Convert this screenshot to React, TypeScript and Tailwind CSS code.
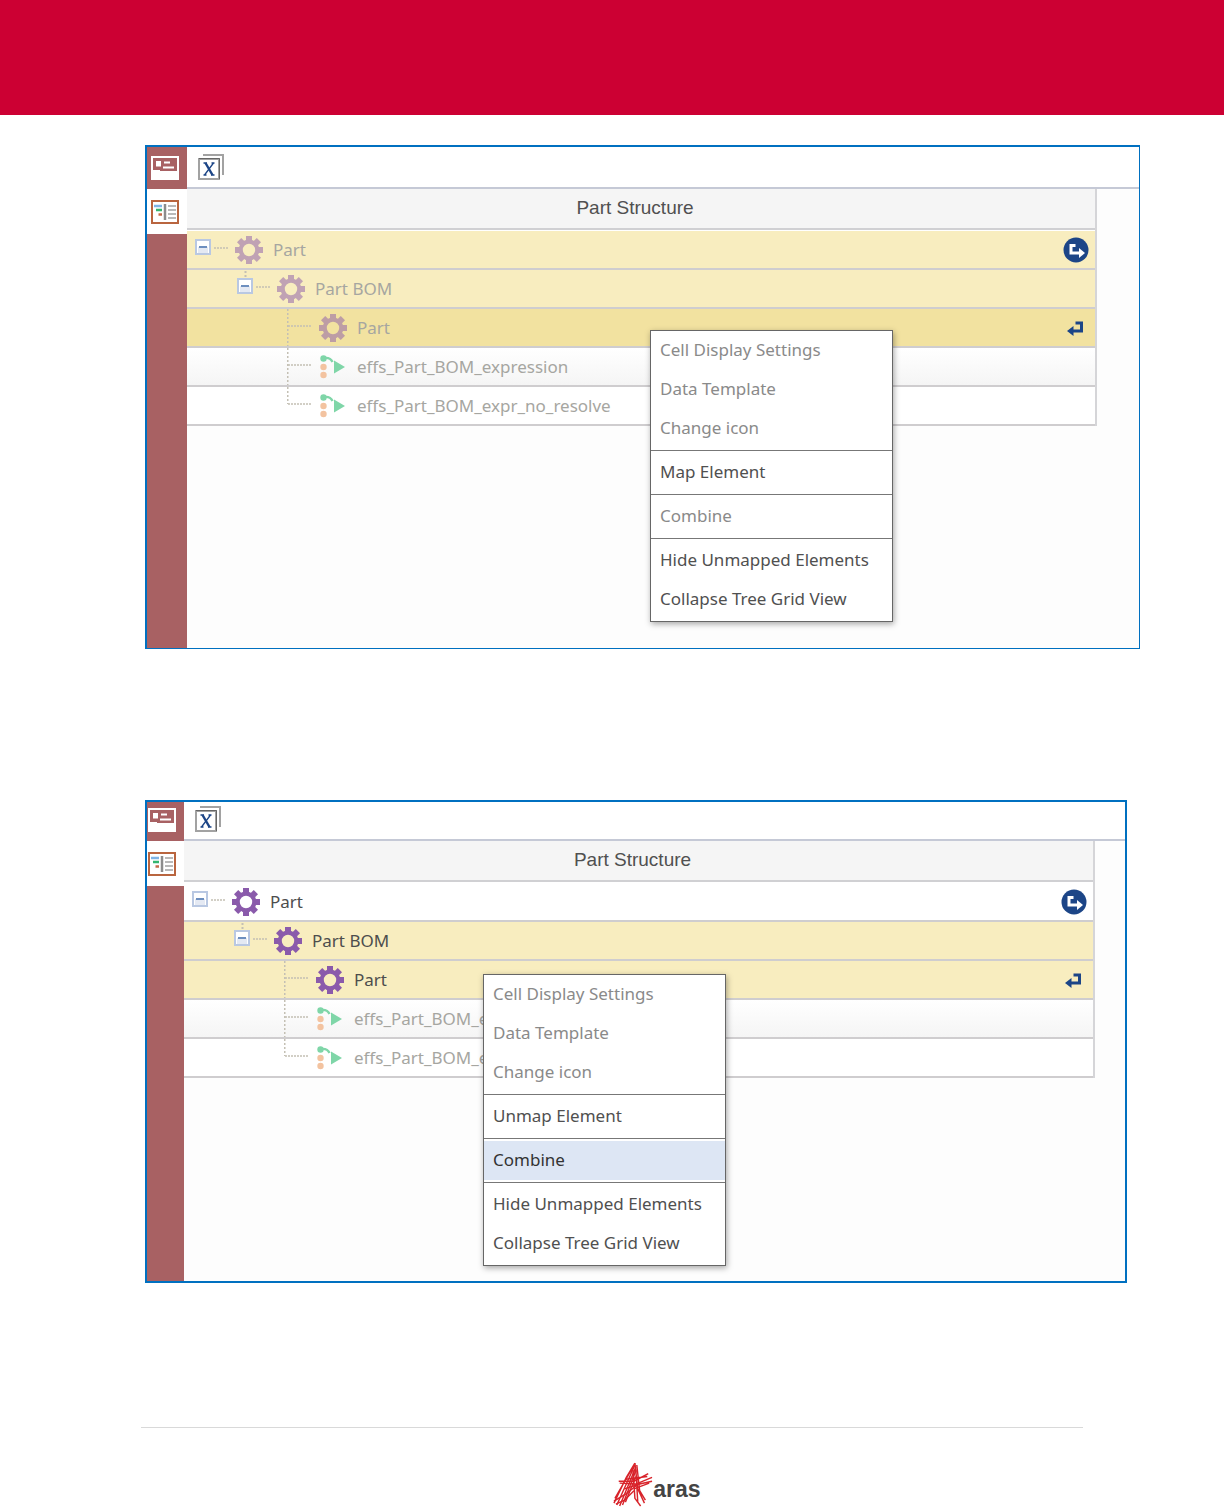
import React from 'react';

type RowKind = 'part' | 'expression';
type Tone = 'plain' | 'mapped' | 'selected' | 'stripe';

interface TreeRow {
  label: string;
  level: 0 | 1 | 2;
  kind: RowKind;
  tone: Tone;
  muted: boolean;
  last?: boolean;
  action?: 'enter' | 'return';
}

interface MenuItem {
  label: string;
  disabled?: boolean;
  active?: boolean;
}

const toneClass: Record<Tone, string> = {
  plain: 'bg-white',
  mapped: 'bg-[#f8edbf]',
  selected: 'bg-[#f2e2a0]',
  stripe: 'bg-linear-to-b from-white to-[#f5f5f5]',
};

const indentClass = ['pl-2', 'pl-[50px]', 'pl-[100px]'];

const unmappedRows: TreeRow[] = [
  { label: 'Part', level: 0, kind: 'part', tone: 'mapped', muted: true, action: 'enter' },
  { label: 'Part BOM', level: 1, kind: 'part', tone: 'mapped', muted: true },
  { label: 'Part', level: 2, kind: 'part', tone: 'selected', muted: true, action: 'return' },
  { label: 'effs_Part_BOM_expression', level: 2, kind: 'expression', tone: 'stripe', muted: true },
  { label: 'effs_Part_BOM_expr_no_resolve', level: 2, kind: 'expression', tone: 'plain', muted: true, last: true },
];

const mappedRows: TreeRow[] = [
  { label: 'Part', level: 0, kind: 'part', tone: 'plain', muted: false, action: 'enter' },
  { label: 'Part BOM', level: 1, kind: 'part', tone: 'mapped', muted: false },
  { label: 'Part', level: 2, kind: 'part', tone: 'mapped', muted: false, action: 'return' },
  { label: 'effs_Part_BOM_expression', level: 2, kind: 'expression', tone: 'stripe', muted: true },
  { label: 'effs_Part_BOM_expr_no_resolve', level: 2, kind: 'expression', tone: 'plain', muted: true, last: true },
];

const displayGroup: MenuItem[] = [
  { label: 'Cell Display Settings', disabled: true },
  { label: 'Data Template', disabled: true },
  { label: 'Change icon', disabled: true },
];

const viewGroup: MenuItem[] = [{ label: 'Hide Unmapped Elements' }, { label: 'Collapse Tree Grid View' }];

const FormIcon = () => (
  <svg width="28" height="24" viewBox="0 0 28 24">
    <rect width="28" height="24" fill="#fff" />
    <path d="M2 2h24v13H9v-1H2z" fill="#a86163" />
    <rect x="5" y="5" width="5" height="5.500" fill="#fff" />
    <path d="M13 6.500h6M12 11.500h11" stroke="#fff" strokeWidth="2" />
  </svg>
);

const TreeViewIcon = () => (
  <svg width="28" height="24" viewBox="0 0 28 24">
    <rect x="1" y="1" width="26" height="22" fill="#fff" stroke="#b9653f" strokeWidth="2" />
    <path d="M3 6h8" stroke="#7fb4e6" strokeWidth="2.500" />
    <path d="M5 10h6" stroke="#35b56f" strokeWidth="2.500" />
    <path d="M7.500 14.500h3.500" stroke="#c46a48" strokeWidth="2.500" />
    <path d="M14 4v16" stroke="#8c8c8c" strokeWidth="2.500" />
    <path d="M17 6h8M17 10h8M17 14h8M17 18h8" stroke="#b9b9b9" strokeWidth="2" />
  </svg>
);

const ExcelIcon = () => (
  <svg width="26" height="26" viewBox="0 0 26 26">
    <path d="M5 1h20v20" fill="none" stroke="#a2a2a2" strokeWidth="2" />
    <rect x="1" y="5" width="20" height="20" fill="#fff" stroke="#a2a2a2" strokeWidth="2" />
    <path d="M1 4.500h20.500V25" fill="none" stroke="#666" />
    <path d="M7.500 9l7 12" stroke="#1c4587" strokeWidth="2.400" />
    <path d="M5.500 9h3.500M13.500 9h3M5.500 21h3M13 21h3.500M15.500 9L6.500 21" stroke="#1c4587" strokeWidth="1.300" />
  </svg>
);

const GearIcon = ({ muted }: { muted: boolean }) => (
  <svg
    width="28"
    height="28"
    viewBox="0 0 28 28"
    className={muted ? 'shrink-0 text-[#8a5aab] opacity-50' : 'shrink-0 text-[#8a5aab]'}
  >
    <circle cx="14" cy="14" r="8.300" fill="none" stroke="currentColor" strokeWidth="4.200" />
    {[0, 45, 90, 135, 180, 225, 270, 315].map((angle) => (
      <rect key={angle} x="11" y="0" width="6" height="5" fill="currentColor" transform={`rotate(${angle} 14 14)`} />
    ))}
  </svg>
);

const ExpressionIcon = () => (
  <svg width="28" height="24" viewBox="0 0 28 24" className="shrink-0">
    <circle cx="4.500" cy="3.500" r="3.200" fill="#7fd6a8" />
    <path d="M5 3C9 2.500 12 3.500 13.500 7" fill="none" stroke="#7fd6a8" strokeWidth="2.400" />
    <circle cx="4.500" cy="12" r="3.200" fill="#f3c3a0" />
    <circle cx="4.500" cy="20" r="3.200" fill="#f3c3a0" />
    <path d="M15 5.500v13L26 12z" fill="#7fd6a8" />
  </svg>
);

const EnterIcon = () => (
  <svg width="26" height="26" viewBox="0 0 26 26">
    <circle cx="13" cy="13" r="12.500" fill="#1c4587" />
    <path d="M12.500 8.500H8V16h9" fill="none" stroke="#fff" strokeWidth="3" />
    <path d="M16 11l6 5-6 5z" fill="#fff" />
  </svg>
);

const ReturnIcon = () => (
  <svg width="26" height="26" viewBox="0 0 26 26">
    <path d="M12.500 8H18.500v8H9" fill="none" stroke="#1c4587" strokeWidth="3" />
    <path d="M10.500 11v10L4 16z" fill="#1c4587" />
  </svg>
);

// Minus box plus the dotted line that leads to the row icon
const Expander = ({ label, nested }: { label: string; nested: boolean }) => (
  <button type="button" aria-label={`Collapse ${label}`} className="mr-1.5 block shrink-0">
    <svg width="34" height="37" viewBox="0 0 34 37" className="block">
      {nested && <path d="M8.500 1v7" stroke="#c4c0b4" strokeWidth="2" strokeDasharray="2 2" />}
      <rect x="1" y="9" width="14" height="14" fill="#fff" stroke="#b9c8e2" strokeWidth="2" />
      <rect x="3" y="16" width="10" height="6" fill="#e4e9f3" />
      <path d="M4 16h8" stroke="#6d8fbf" strokeWidth="2" />
      <path d="M19 17h15" stroke="#c4c0b4" strokeWidth="1.500" strokeDasharray="2 1" />
    </svg>
  </button>
);

const Elbow = ({ last }: { last: boolean }) => (
  <svg width="26" height="37" viewBox="0 0 26 37" className="mr-1.5 shrink-0">
    <path d={last ? 'M.5 0v17' : 'M.5 0v37'} stroke="#c4c0b4" strokeWidth="2" strokeDasharray="2 2" />
    <path d="M1 17h24" stroke="#c4c0b4" strokeWidth="1.500" strokeDasharray="2 1" />
  </svg>
);

const TreeGrid = ({ rows }: { rows: TreeRow[] }) => (
  <table className="w-full border-separate border-spacing-0 border-r-2 border-[#d5d5d8] bg-white">
    <thead>
      <tr>
        <th className="p-0 pb-px font-normal">
          <div className="flex h-[41px] items-center justify-center border-b-2 border-[#d0d0d3] bg-[#f5f5f5] pr-3 pb-0.5 font-['Liberation_Sans',Arial,sans-serif] text-[19px] text-[#505050]">
            Part Structure
          </div>
        </th>
      </tr>
    </thead>
    <tbody>
      {rows.map((row, i) => (
        <tr key={i}>
          <td className={`border-b-2 border-[#cfcdcf] p-0 ${toneClass[row.tone]}`}>
            <div className={`flex h-[37px] items-center pr-[6px] ${indentClass[row.level]}`}>
              {row.level < 2 ? <Expander label={row.label} nested={row.level === 1} /> : <Elbow last={!!row.last} />}
              {row.kind === 'part' ? <GearIcon muted={row.muted} /> : <ExpressionIcon />}
              <span className={`ml-2.5 whitespace-nowrap ${row.muted ? 'text-[#a6a6a1]' : 'text-[#4d4d4d]'}`}>
                {row.label}
              </span>
              {row.action && (
                <button type="button" aria-label={row.action} className="ml-auto">
                  {row.action === 'enter' ? <EnterIcon /> : <ReturnIcon />}
                </button>
              )}
            </div>
          </td>
        </tr>
      ))}
    </tbody>
  </table>
);

const ContextMenu = ({ groups, className }: { groups: MenuItem[][]; className: string }) => (
  <div
    role="menu"
    className={`absolute w-[243px] border border-[#666] bg-white pb-0.5 shadow-[1px_2px_6px_rgba(0,0,0,0.35)] ${className}`}
  >
    {groups.map((group, i) => (
      <div key={i} role="group" className={i > 0 ? 'mt-0.5 border-t border-[#777] pt-0.5' : ''}>
        {group.map((item) => (
          <button
            key={item.label}
            type="button"
            role="menuitem"
            disabled={item.disabled}
            className={`block h-[39px] w-full px-[9px] pb-0.5 text-left whitespace-nowrap ${
              item.active ? 'bg-[#dde6f4] text-[#333]' : item.disabled ? 'text-[#8a8a8a]' : 'text-[#505050]'
            }`}
          >
            {item.label}
          </button>
        ))}
      </div>
    ))}
  </div>
);

interface EditorProps {
  rows: TreeRow[];
  groups: MenuItem[][];
  className: string;
  sidebarClass: string;
  toolbarClass: string;
  bodyClass: string;
  menuClass: string;
}

const Editor: React.FC<EditorProps> = ({
  rows,
  groups,
  className,
  sidebarClass,
  toolbarClass,
  bodyClass,
  menuClass,
}) => (
  <section className={`relative flex border-[#0070c0] bg-[#fdfdfd] ${className}`}>
    <nav className={`flex shrink-0 flex-col bg-[#a86163] ${sidebarClass}`}>
      <button type="button" aria-label="Form" className={`flex items-end justify-end pr-2 pb-[9px] ${toolbarClass}`}>
        <FormIcon />
      </button>
      <button type="button" aria-label="Tree grid view" className="flex h-[45px] items-center justify-end bg-white pr-2">
        <TreeViewIcon />
      </button>
    </nav>
    <div className="min-w-0 flex-1">
      <div className={`flex items-end border-b-2 border-[#c5c9d6] bg-white pb-[7px] pl-[11px] ${toolbarClass}`}>
        <button type="button" aria-label="Export to Excel">
          <ExcelIcon />
        </button>
      </div>
      <div className={bodyClass}>
        <TreeGrid rows={rows} />
      </div>
    </div>
    <ContextMenu groups={groups} className={menuClass} />
  </section>
);

const ArasLogo = () => (
  <svg width="40" height="46" viewBox="0 0 42 48" fill="none" stroke="#d8232a" strokeWidth="1.500">
    {/* left leg */}
    <path d="M23 1L14 16L1 43M23 3L4 45M24 5L7 46M24 9L10 45M21 5L2 38M24 15L13 42" />
    {/* right leg */}
    <path d="M23 1L26 28L33 43M25 3L28 30L34 40M21 8L23 38L29 46M24 8L26 42" />
    {/* arms */}
    <path d="M6 20L22 20L37 12M7 22L24 23L41 16M12 28L28 23L41 20M13 18L36 15M22 28L38 22" />
    <path d="M1 41L14 33L24 25M3 44L12 40L22 30" />
  </svg>
);

export default function App() {
  return (
    <div className="bg-white font-['Noto_Sans',sans-serif] text-[17px] leading-6">
      <header className="h-[115px] bg-[#cc0033]" />
      <main className="pt-[30px] pl-[145px]">
        <Editor
          rows={unmappedRows}
          groups={[displayGroup, [{ label: 'Map Element' }], [{ label: 'Combine', disabled: true }], viewGroup]}
          className="mr-[84px] border-t-2 border-r border-b border-l-2"
          sidebarClass="w-10"
          toolbarClass="h-[42px]"
          bodyClass="pr-[42px] pb-[222px]"
          menuClass="top-[183px] left-[503px]"
        />
        <Editor
          rows={mappedRows}
          groups={[displayGroup, [{ label: 'Unmap Element' }], [{ label: 'Combine', active: true }], viewGroup]}
          className="mt-[151px] mr-[97px] border-2"
          sidebarClass="w-[37px]"
          toolbarClass="h-[39px]"
          bodyClass="pr-[30px] pb-[203px]"
          menuClass="top-[172px] left-[336px]"
        />
      </main>
      <footer className="mt-36 mr-[141px] ml-[141px] flex justify-center border-t border-[#d9d9d9] pt-[34px] pl-[90px]">
        <div className="flex items-center">
          <ArasLogo />
          <span className="pt-2 font-['Liberation_Sans',Arial,sans-serif] text-[23px] font-bold text-[#444]">aras</span>
        </div>
      </footer>
    </div>
  );
}
